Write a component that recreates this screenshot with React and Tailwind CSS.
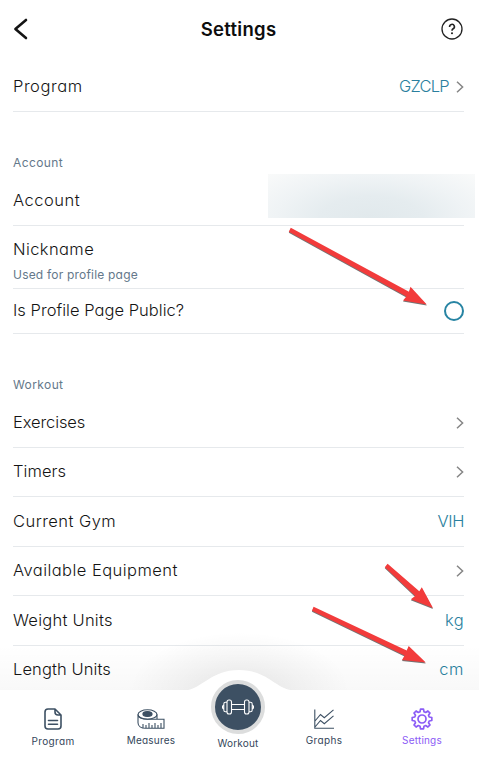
import React from "react";

const Chevron = () => (
  <svg className="ml-[7px] h-3 w-2" viewBox="0 0 8 12" fill="none" stroke="#858585" strokeWidth="1.5">
    <path d="M1 .8 6.6 6 1 11.2" />
  </svg>
);

function Row({ label, value, chevron, track, valueTrack, height, children }) {
  return (
    <div className={`flex shrink-0 items-center justify-between border-b border-[#e6e9ec] ${height}`}>
      <span className={`pb-[2px] text-[16.5px] font-[350] leading-6 text-[#141414] ${track}`}>{label}</span>
      <span className="flex items-center">
        {value && <span className={`pb-[2px] text-[16.5px] font-[350] leading-6 text-[#2a7f9e] ${valueTrack}`}>{value}</span>}
        {chevron && <Chevron />}
        {children}
      </span>
    </div>
  );
}

function Tab({ label, color, track, className, children }) {
  return (
    <div className={`flex flex-col items-center ${className}`}>
      {children}
      <span className={`text-[10px] leading-4 ${color} ${track}`}>{label}</span>
    </div>
  );
}

export default function App() {
  return (
    <div className="relative flex h-[757px] w-[479px] flex-col overflow-hidden bg-white font-['Inter','Open_Sans',sans-serif] [font-feature-settings:'cv11','ss03']">
      <header className="flex h-[62px] shrink-0 items-start justify-between pl-[13px] pr-4">
        <svg className="mt-[18px] h-[23px] w-[23px]" viewBox="0 0 23 23" fill="none" stroke="#141414" strokeWidth="2.6" strokeLinecap="round" strokeLinejoin="round">
          <path d="M13 2 2.4 11 13 20" />
        </svg>
        <h1 className="mt-[15px] text-[18.5px] font-semibold leading-7 tracking-[0.3px] text-[#0d0d0d]">Settings</h1>
        <svg className="mt-[18px] h-[22px] w-[22px]" viewBox="0 0 22 22" fill="none" stroke="#222">
          <circle cx="11" cy="11" r="10" strokeWidth="1.3" />
          <path d="M8.6 9A2.4 2.4 0 1 1 12.2 10.8Q11 11.5 11 12.7" strokeWidth="1.6" />
          <circle cx="11" cy="15.3" r="1.05" fill="#222" stroke="none" />
        </svg>
      </header>

      <main className="flex h-[628px] shrink-0 flex-col pl-[13px] pr-[15px]">
        <Row label="Program" value="GZCLP" chevron height="h-[50px]" track="tracking-[0.55px]" valueTrack="tracking-[-0.75px]" />

        <h2 className="mt-[42px] h-[22px] shrink-0 text-[12px] leading-[18px] tracking-[0.4px] text-[#64788a]">Account</h2>
        <Row label="Account" height="h-[50px]" track="tracking-[0.5px]">
          <span className="relative -right-[11px] -top-[5px] h-[44px] w-[207px] bg-[radial-gradient(ellipse_at_50%_100%,#e1e9ec_0%,#e5ecef_35%,#eff3f5_65%,#f9fafa_100%)]" />
        </Row>
        <div className="flex h-[63px] shrink-0 flex-col border-b border-[#e6e9ec] pt-[11px]">
          <span className="text-[16.5px] font-[350] leading-6 tracking-[0.4px] text-[#141414]">Nickname</span>
          <span className="mt-[5px] text-[12px] leading-[18px] tracking-[0.2px] text-[#64788a]">Used for profile page</span>
        </div>
        <Row label="Is Profile Page Public?" height="h-[45px]" track="tracking-[0.03px]">
          <span className="h-5 w-5 rounded-full border-2 border-[#2784a3]" />
        </Row>

        <h2 className="mt-[42px] h-[22px] shrink-0 text-[12px] leading-[18px] tracking-[0.4px] text-[#64788a]">Workout</h2>
        <Row label="Exercises" chevron height="h-[50px]" track="tracking-[-0.1px]" />
        <Row label="Timers" chevron height="h-[49px]" track="tracking-[0.05px]" />
        <Row label="Current Gym" value="VIH" height="h-[50px]" track="tracking-[0.45px]" valueTrack="tracking-[-0.4px]" />
        <Row label="Available Equipment" chevron height="h-[49px]" track="tracking-[0.45px]" />
        <Row label="Weight Units" value="kg" height="h-[50px]" track="tracking-[0.25px]" valueTrack="tracking-[0.4px]" />
        <Row label="Length Units" value="cm" height="h-[48px]" track="tracking-[0.1px]" valueTrack="tracking-[0.6px]" />
      </main>

      <nav className="relative flex h-[67px] shrink-0 bg-white">
        <div className="pointer-events-none absolute inset-x-0 bottom-full h-[60px] bg-[radial-gradient(ellipse_110px_58px_at_50%_100%,rgba(0,0,0,0.085),rgba(0,0,0,0.035)_55%,transparent),linear-gradient(to_top,rgba(0,0,0,0.028),transparent_75%)]" />
        <svg className="absolute -top-5 left-[185px] h-[21px] w-[108px]" viewBox="0 0 108 21" fill="#fff">
          <path d="M0 20.5C17 19 26 0 54 0S91 19 108 20.5V21H0Z" />
        </svg>

        <Tab label="Program" color="text-[#34465a]" track="tracking-[0.35px]" className="ml-[23px] w-[60px] pt-[18px]">
          <svg className="mb-[3px] h-[22px] w-[18px]" viewBox="0 0 18 22" fill="none" stroke="#3d5063" strokeWidth="1.6" strokeLinejoin="round" strokeLinecap="round">
            <path d="M4 1h7l6 6v11a3 3 0 0 1-3 3H4a3 3 0 0 1-3-3V4a3 3 0 0 1 3-3ZM11 1v3a3 3 0 0 0 3 3h3M4.5 12.5h9M4.5 16.2h9" />
          </svg>
        </Tab>
        <Tab label="Measures" color="text-[#34465a]" track="tracking-[0.2px]" className="ml-[38px] w-[60px] pt-[19px]">
          <svg className="mb-[3px] h-[20px] w-[28px]" viewBox="0 0 28 20" fill="none" stroke="#3d5063" strokeWidth="1.1">
            <ellipse cx="10.5" cy="5.5" rx="9.5" ry="4.7" />
            <ellipse cx="10.5" cy="5" rx="4.6" ry="2.4" fill="#3d5063" />
            <path d="M1 5.5v8.2c0 3.3 3.2 5.5 7.5 5.5H27V10.2H11C5 10.2 1.2 8.5 1 5.5M20 5.5v4.7M6 19v-4M9 19v-3M12 19v-5M15 19v-3M18 19v-5M21 19v-3M24 19v-5" />
          </svg>
        </Tab>
        <Tab label="Workout" color="text-[#34465a]" track="tracking-[0.2px]" className="relative z-10 -mt-[10px] ml-[27px] w-[60px]">
          <span className="mb-[1px] flex h-[54px] w-[54px] shrink-0 items-center justify-center rounded-full border-4 border-[#dcdddd] bg-[#3d5063]">
            <svg className="h-[16px] w-[32px]" viewBox="0 0 32 16" fill="none" stroke="#fff" strokeWidth="1.1">
              <rect x="5" y="1" width="4.5" height="14" rx="2" />
              <rect x="22.5" y="1" width="4.5" height="14" rx="2" />
              <path d="M9.5 5.5h13M9.5 10.5h13M5 3.2H3.5Q1.8 3.2 1.8 5V11q0 1.8 1.7 1.8H5M1.8 6Q.5 6.3.5 8t1.3 2M27 3.2h1.5q1.7 0 1.7 1.8V11q0 1.8-1.7 1.8H27M30.2 6q1.3.3 1.3 2t-1.3 2" />
            </svg>
          </span>
        </Tab>
        <Tab label="Graphs" color="text-[#34465a]" track="tracking-[0.35px]" className="ml-[26px] w-[60px] pt-[19px]">
          <svg className="mb-[3px] h-[20px] w-[20px]" viewBox="0 0 20 20" fill="none" stroke="#3d5063" strokeWidth="1.1">
            <path d="M.8.5v18.7H20M1 12 6.5 5.5 10.3 8.7 19.5.8M1 18 6.5 11.5 10.3 14.7 19.5 6.8" />
          </svg>
        </Tab>
        <Tab label="Settings" color="text-[#8b5cf6]" track="tracking-[0.2px]" className="ml-[38px] w-[60px] pt-[18px]">
          <svg className="mb-[2px] h-[22px] w-[22px]" viewBox="0 0 22 22" fill="none" stroke="#8b5cf6" strokeWidth="1.7" strokeLinejoin="round">
            <path d="M9.5 1.2h3l.5 2.6 1.7.7 2.2-1.5 2.1 2.1-1.5 2.2.7 1.7 2.6.5v3l-2.6.5-.7 1.7 1.5 2.2-2.1 2.1-2.2-1.5-1.7.7-.5 2.6h-3L9 18.2l-1.7-.7L5.1 19 3 16.9l1.5-2.2-.7-1.7-2.6-.5v-3L3.800 9l.7-1.7L3 5.100 5.100 3l2.200 1.500L9 3.800Z" />
            <circle cx="11" cy="11" r="4" />
          </svg>
        </Tab>
      </nav>

      <svg className="pointer-events-none absolute inset-0 h-full w-full [filter:drop-shadow(0.5px_1px_0.5px_rgba(0,0,0,0.55))]" viewBox="0 0 479 757" fill="#f23b3b">
        <path d="M290.8 227.8 409 291.7 410.5 286.8 426.8 304.5 403 300.5 406.4 296.5 288.8 231.8Z" />
        <path d="M387.6 563.8 419.3 591.2 421.8 587.3 433 608 410.8 599.3 415.2 596 384.8 567.2Z" />
        <path d="M313.6 606.8 406.7 650.4 408.7 646 425.8 662.5 402 660 404.6 655.6 311.9 610.8Z" />
      </svg>
    </div>
  );
}
